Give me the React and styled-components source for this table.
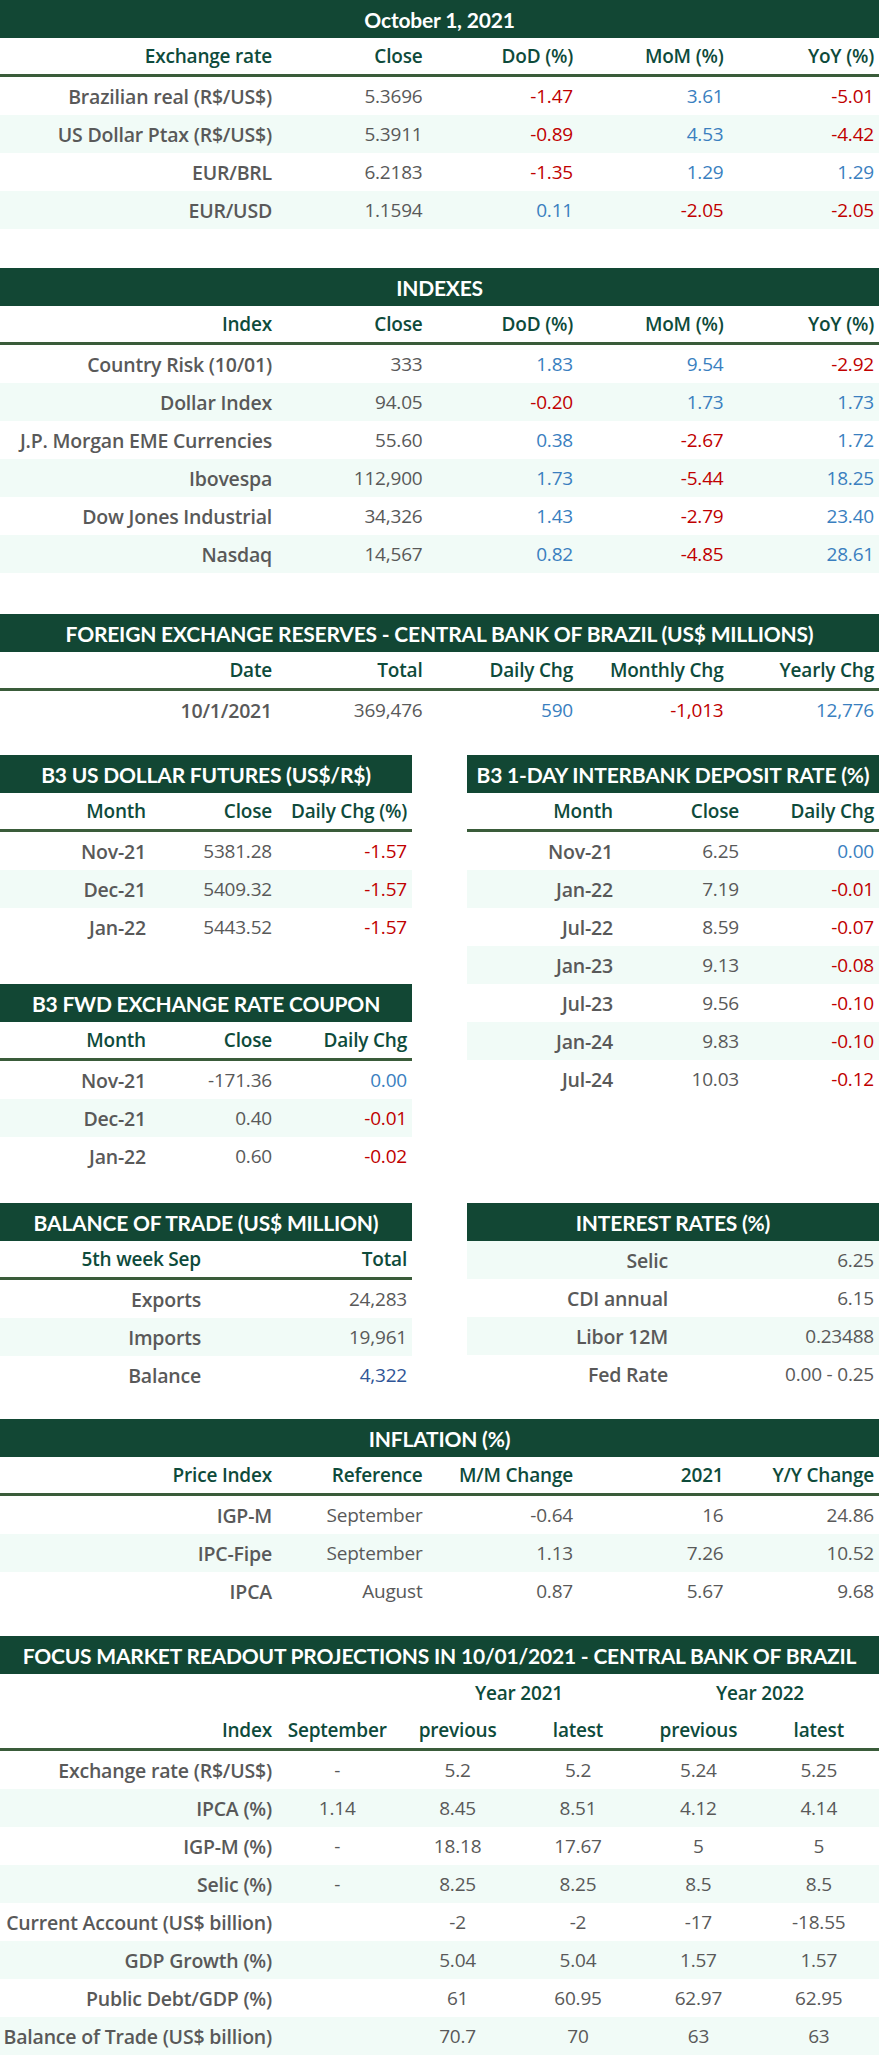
import React from "react";
import styled, { createGlobalStyle } from "styled-components";

const GlobalStyle = createGlobalStyle`
  html, body { margin: 0; padding: 0; background: #ffffff; }
  body { font-family: "Open Sans", "Liberation Sans", sans-serif; }
`;

const C = {
  band: "#124734",
  line: "#3a5c3a",
  head: "#0e4b3b",
  text: "#595959",
  red: "#c00000",
  blue: "#3a7fbf",
  navy: "#2f5597",
  stripe: "#f1fbf7",
};

const Page = styled.div`
  width: 879px;
  display: flex;
  flex-direction: column;
`;

const Table = styled.div`
  display: flex;
  flex-direction: column;
  margin-top: ${(p) => p.$mt || 0}px;
`;

const Band = styled.div`
  height: 38px;
  background: ${C.band};
  color: #ffffff;
  font-family: Lato, "Open Sans", sans-serif;
  font-weight: 700;
  font-size: 21px;
  display: flex;
  align-items: center;
  justify-content: center;
  white-space: nowrap;
  letter-spacing: -0.2px;
`;

const Row = styled.div`
  display: grid;
  grid-template-columns: ${(p) => p.$cols};
  height: ${(p) => (p.$head ? 36 : 38)}px;
  background: ${(p) => (p.$stripe ? C.stripe : "transparent")};
  border-bottom: ${(p) => (p.$head ? `3px solid ${C.line}` : "none")};
  align-items: center;
`;

const Cell = styled.div`
  padding-right: ${(p) => (p.$align === "center" ? 0 : 5)}px;
  text-align: ${(p) => p.$align || "right"};
  font-size: ${(p) => (p.$bold ? 19.5 : 19)}px;
  white-space: nowrap;
  color: ${(p) => p.$color || C.text};
  font-weight: ${(p) => (p.$bold ? 600 : 400)};
  letter-spacing: -0.2px;
`;

const HeadCell = styled(Cell)`
  color: ${C.head};
  font-weight: 600;
  font-size: 19px;
`;

const TwoCol = styled.div`
  display: grid;
  grid-template-columns: 412px 412px;
  column-gap: 55px;
  align-items: start;
  margin-top: ${(p) => p.$mt || 0}px;
`;

const Stack = styled.div`
  display: flex;
  flex-direction: column;
`;

const tone = (v) => {
  if (v === undefined || v === null) return C.text;
  return String(v).trim().startsWith("-") ? C.red : C.blue;
};

function DataTable({ title, cols, headers, rows, colored = [], mt, firstPlain, headAlign, cellAlign }) {
  return (
    <Table $mt={mt}>
      {title && <Band>{title}</Band>}
      {headers && (
        <Row $cols={cols} $head>
          {headers.map((h, i) => (
            <HeadCell key={i} $align={headAlign ? headAlign(i) : "right"}>
              {h}
            </HeadCell>
          ))}
        </Row>
      )}
      {rows.map((r, ri) => (
        <Row key={ri} $cols={cols} $stripe={ri % 2 === (firstPlain === false ? 0 : 1)}>
          {r.map((v, ci) => (
            <Cell
              key={ci}
              $bold={ci === 0}
              $align={cellAlign ? cellAlign(ci) : "right"}
              $color={colored.includes(ci) ? tone(v) : C.text}
            >
              {v}
            </Cell>
          ))}
        </Row>
      ))}
    </Table>
  );
}

const wide = "277px repeat(4, 1fr)";
const narrow = "151px 126px 135px";
const half = "206px 206px";
const focusCols = "277px repeat(5, 1fr)";

const YearRow = styled.div`
  display: grid;
  grid-template-columns: 277px 121px 242px 240px;
  height: 38px;
  align-items: center;
`;

const YearCell = styled.div`
  text-align: center;
  font-size: 19px;
  font-weight: 600;
  color: ${C.head};
  letter-spacing: -0.2px;
`;

export default function App() {
  return (
    <>
      <GlobalStyle />
      <Page>
        <DataTable
          title="October 1, 2021"
          cols={wide}
          headers={["Exchange rate", "Close", "DoD (%)", "MoM (%)", "YoY (%)"]}
          colored={[2, 3, 4]}
          rows={[
            ["Brazilian real (R$/US$)", "5.3696", "-1.47", "3.61", "-5.01"],
            ["US Dollar Ptax (R$/US$)", "5.3911", "-0.89", "4.53", "-4.42"],
            ["EUR/BRL", "6.2183", "-1.35", "1.29", "1.29"],
            ["EUR/USD", "1.1594", "0.11", "-2.05", "-2.05"],
          ]}
        />
        <DataTable
          mt={39}
          title="INDEXES"
          cols={wide}
          headers={["Index", "Close", "DoD (%)", "MoM (%)", "YoY (%)"]}
          colored={[2, 3, 4]}
          rows={[
            ["Country Risk (10/01)", "333", "1.83", "9.54", "-2.92"],
            ["Dollar Index", "94.05", "-0.20", "1.73", "1.73"],
            ["J.P. Morgan EME Currencies", "55.60", "0.38", "-2.67", "1.72"],
            ["Ibovespa", "112,900", "1.73", "-5.44", "18.25"],
            ["Dow Jones Industrial", "34,326", "1.43", "-2.79", "23.40"],
            ["Nasdaq", "14,567", "0.82", "-4.85", "28.61"],
          ]}
        />
        <DataTable
          mt={41}
          title="FOREIGN EXCHANGE RESERVES - CENTRAL BANK OF BRAZIL (US$ MILLIONS)"
          cols={wide}
          headers={["Date", "Total", "Daily Chg", "Monthly Chg", "Yearly Chg"]}
          colored={[2, 3, 4]}
          rows={[["10/1/2021", "369,476", "590", "-1,013", "12,776"]]}
        />
        <TwoCol $mt={26}>
          <Stack>
            <DataTable
              title="B3 US DOLLAR FUTURES (US$/R$)"
              cols={narrow}
              headers={["Month", "Close", "Daily Chg (%)"]}
              colored={[2]}
              rows={[
                ["Nov-21", "5381.28", "-1.57"],
                ["Dec-21", "5409.32", "-1.57"],
                ["Jan-22", "5443.52", "-1.57"],
              ]}
            />
            <DataTable
              mt={38}
              title="B3 FWD EXCHANGE RATE COUPON"
              cols={narrow}
              headers={["Month", "Close", "Daily Chg"]}
              colored={[2]}
              rows={[
                ["Nov-21", "-171.36", "0.00"],
                ["Dec-21", "0.40", "-0.01"],
                ["Jan-22", "0.60", "-0.02"],
              ]}
            />
          </Stack>
          <Stack>
            <DataTable
              title="B3 1-DAY INTERBANK DEPOSIT RATE (%)"
              cols={narrow}
              headers={["Month", "Close", "Daily Chg"]}
              colored={[2]}
              rows={[
                ["Nov-21", "6.25", "0.00"],
                ["Jan-22", "7.19", "-0.01"],
                ["Jul-22", "8.59", "-0.07"],
                ["Jan-23", "9.13", "-0.08"],
                ["Jul-23", "9.56", "-0.10"],
                ["Jan-24", "9.83", "-0.10"],
                ["Jul-24", "10.03", "-0.12"],
              ]}
            />
          </Stack>
        </TwoCol>
        <TwoCol $mt={28}>
          <Table>
            <Band>BALANCE OF TRADE (US$ MILLION)</Band>
            <Row $cols={half} $head>
              <HeadCell>5th week Sep</HeadCell>
              <HeadCell>Total</HeadCell>
            </Row>
            <Row $cols={half}>
              <Cell $bold>Exports</Cell>
              <Cell>24,283</Cell>
            </Row>
            <Row $cols={half} $stripe>
              <Cell $bold>Imports</Cell>
              <Cell>19,961</Cell>
            </Row>
            <Row $cols={half}>
              <Cell $bold>Balance</Cell>
              <Cell $color={C.navy}>4,322</Cell>
            </Row>
          </Table>
          <DataTable
            title="INTEREST RATES (%)"
            cols={half}
            firstPlain={false}
            rows={[
              ["Selic", "6.25"],
              ["CDI annual", "6.15"],
              ["Libor 12M", "0.23488"],
              ["Fed Rate", "0.00 - 0.25"],
            ]}
          />
        </TwoCol>
        <DataTable
          mt={25}
          title="INFLATION (%)"
          cols={wide}
          headers={["Price Index", "Reference", "M/M Change", "2021", "Y/Y Change"]}
          rows={[
            ["IGP-M", "September", "-0.64", "16", "24.86"],
            ["IPC-Fipe", "September", "1.13", "7.26", "10.52"],
            ["IPCA", "August", "0.87", "5.67", "9.68"],
          ]}
        />
        <Table $mt={26}>
          <Band>FOCUS MARKET READOUT PROJECTIONS IN 10/01/2021 - CENTRAL BANK OF BRAZIL</Band>
          <YearRow>
            <span />
            <span />
            <YearCell>Year 2021</YearCell>
            <YearCell>Year 2022</YearCell>
          </YearRow>
        </Table>
        <DataTable
          cols={focusCols}
          headers={["Index", "September", "previous", "latest", "previous", "latest"]}
          headAlign={(i) => (i === 0 ? "right" : "center")}
          cellAlign={(i) => (i === 0 ? "right" : "center")}
          rows={[
            ["Exchange rate (R$/US$)", "-", "5.2", "5.2", "5.24", "5.25"],
            ["IPCA (%)", "1.14", "8.45", "8.51", "4.12", "4.14"],
            ["IGP-M (%)", "-", "18.18", "17.67", "5", "5"],
            ["Selic (%)", "-", "8.25", "8.25", "8.5", "8.5"],
            ["Current Account (US$ billion)", "", "-2", "-2", "-17", "-18.55"],
            ["GDP Growth (%)", "", "5.04", "5.04", "1.57", "1.57"],
            ["Public Debt/GDP (%)", "", "61", "60.95", "62.97", "62.95"],
            ["Balance of Trade (US$ billion)", "", "70.7", "70", "63", "63"],
          ]}
        />
      </Page>
    </>
  );
}
